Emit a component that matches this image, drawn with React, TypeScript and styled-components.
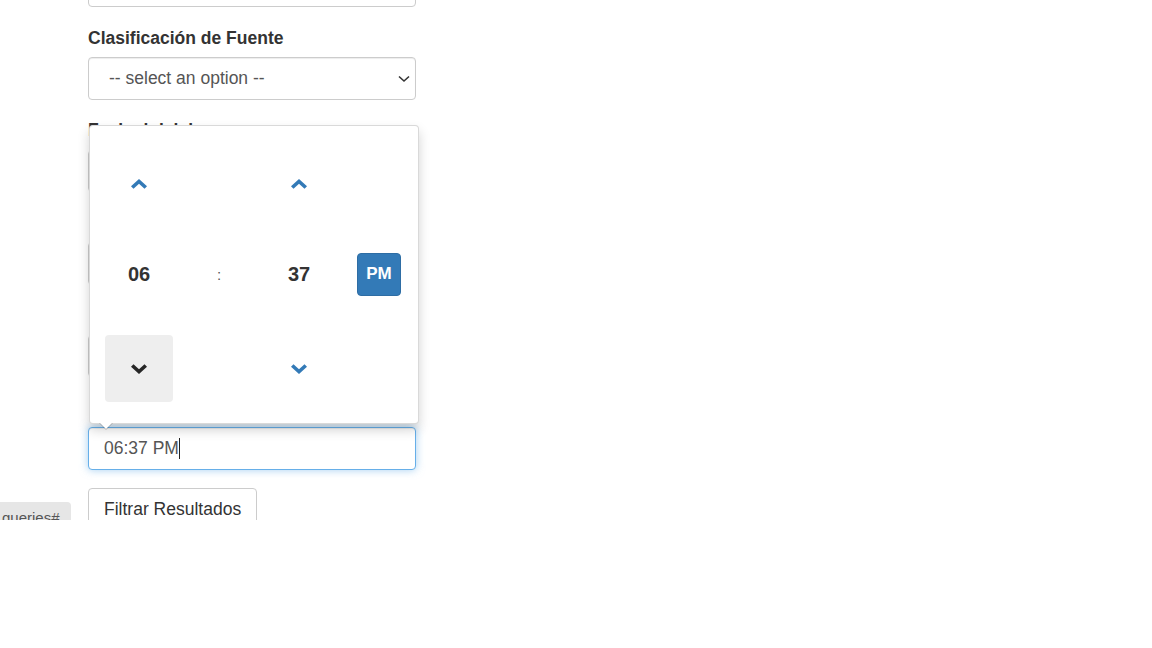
import React from "react";
import styled, { createGlobalStyle } from "styled-components";

const Global = createGlobalStyle`
  html, body { margin: 0; padding: 0; background: #fff; }
  body { font-family: "Liberation Sans", Arial, Helvetica, sans-serif; color: #333; }
  * { box-sizing: border-box; }
`;

const Viewport = styled.div`
  height: 520px;
  overflow: hidden;
`;

const Page = styled.div`
  display: grid;
  grid-template-columns: 88px 328px;
  margin-top: -35.5px;
`;

const Form = styled.div`
  grid-column: 2;
  display: flex;
  flex-direction: column;
`;

const Group = styled.div`
  margin-bottom: 18.75px;
`;

const Label = styled.label<{ $covered?: boolean }>`
  display: block;
  font-weight: 700;
  font-size: 17.5px;
  line-height: 25px;
  margin-bottom: 6.25px;
  padding-left: ${(p) => (p.$covered ? "2px" : "0")};
  color: #333;
`;

const TextInput = styled.input`
  display: block;
  width: 100%;
  height: 42.5px;
  padding: 0 15px;
  border: 1px solid #ccc;
  border-radius: 4px;
  font-family: inherit;
  font-size: 17.5px;
  color: #555;
  background: #fff;
  box-shadow: inset 0 1px 1px rgba(0, 0, 0, 0.075);
  outline: none;
`;

const SelectWrap = styled.div`
  position: relative;
`;

const Select = styled.select`
  display: block;
  width: 100%;
  height: 42.5px;
  padding: 0 30px 0 20px;
  border: 1px solid #ccc;
  border-radius: 4px;
  font-family: inherit;
  font-size: 17.5px;
  color: #555;
  background: #fff;
  box-shadow: inset 0 1px 1px rgba(0, 0, 0, 0.075);
  outline: none;
  appearance: none;
  -webkit-appearance: none;
`;

const SelectArrow = styled.svg`
  position: absolute;
  right: 6px;
  top: 17.5px;
  pointer-events: none;
`;

const FieldWrap = styled.div`
  position: relative;
`;

const FocusedField = styled.div`
  height: 42.5px;
  padding: 0 15px;
  border: 1px solid #66afe9;
  border-radius: 4px;
  font-size: 17.5px;
  color: #555;
  display: flex;
  align-items: center;
  background: #fff;
  box-shadow: inset 0 1px 1px rgba(0, 0, 0, 0.075), 0 0 8px rgba(102, 175, 233, 0.6);
`;

const Caret = styled.span`
  display: inline-block;
  width: 1px;
  height: 21px;
  background: #222;
`;

const Popup = styled.div`
  position: absolute;
  left: 1px;
  bottom: calc(100% + 3px);
  width: 330px;
  background: #fff;
  border: 1px solid rgba(0, 0, 0, 0.15);
  border-radius: 4px;
  box-shadow: 0 6px 12px rgba(0, 0, 0, 0.175);
  z-index: 10;

  &::before {
    content: "";
    position: absolute;
    left: 9px;
    bottom: -7px;
    border-left: 7px solid transparent;
    border-right: 7px solid transparent;
    border-top: 7px solid rgba(0, 0, 0, 0.2);
  }
  &::after {
    content: "";
    position: absolute;
    left: 10px;
    bottom: -6px;
    border-left: 6px solid transparent;
    border-right: 6px solid transparent;
    border-top: 6px solid #fff;
  }
`;

const Widget = styled.div`
  display: grid;
  grid-template-columns: 68px 92px 68px 1fr;
  grid-template-rows: 67px 23px 68px 27px 67px;
  padding: 24px 17px 21px 15px;
`;

const StepButton = styled.a<{ $col: number; $row: number; $active?: boolean }>`
  grid-column: ${(p) => p.$col};
  grid-row: ${(p) => p.$row};
  display: flex;
  align-items: center;
  justify-content: center;
  border-radius: 4px;
  cursor: pointer;
  color: ${(p) => (p.$active ? "#262626" : "#337ab7")};
  background: ${(p) => (p.$active ? "#eeeeee" : "transparent")};
`;

const Value = styled.div<{ $col: number }>`
  grid-column: ${(p) => p.$col};
  grid-row: 3;
  display: flex;
  align-items: center;
  justify-content: center;
  font-size: 20px;
  font-weight: 700;
  color: #333;
`;

const Separator = styled.div`
  grid-column: 2;
  grid-row: 3;
  display: flex;
  align-items: center;
  justify-content: center;
  font-size: 15px;
  color: #555;
`;

const MeridianButton = styled.button`
  grid-column: 4;
  grid-row: 3;
  justify-self: end;
  align-self: center;
  width: 44px;
  height: 43px;
  padding: 0;
  border: 1px solid #2e6da4;
  border-radius: 4px;
  background: #337ab7;
  color: #fff;
  font-family: inherit;
  font-size: 17px;
  font-weight: 700;
`;

const ActionRow = styled.div`
  display: contents;
`;

const Badge = styled.span`
  grid-column: 1;
  justify-self: start;
  align-self: start;
  margin-top: 14px;
  width: 71px;
  height: 26px;
  padding: 6px 0 0 2px;
  background: #e6e6e6;
  border-radius: 0 4px 4px 0;
  font-size: 15px;
  line-height: 20px;
  color: #555;
  white-space: nowrap;
`;

const ButtonCell = styled.div`
  grid-column: 2;
`;

const Button = styled.button`
  height: 42.5px;
  padding: 0 15px;
  border: 1px solid #ccc;
  border-radius: 4px;
  background: #fff;
  color: #333;
  font-family: inherit;
  font-size: 17.5px;
`;

const Chevron = ({ down }: { down?: boolean }) => (
  <svg width="16" height="10" viewBox="0 0 16 10" aria-hidden="true">
    <path
      d="M8 0 L16 7.2 L13.5 9.8 L8 4.8 L2.5 9.8 L0 7.2 Z"
      fill="currentColor"
      transform={down ? "rotate(180 8 5)" : undefined}
    />
  </svg>
);

export default function App() {
  return (
    <>
      <Global />
      <Viewport>
        <Page>
          <Form>
            <Group>
              <TextInput type="text" />
            </Group>
            <Group>
              <Label>Clasificación de Fuente</Label>
              <SelectWrap>
                <Select defaultValue="">
                  <option value="">-- select an option --</option>
                </Select>
                <SelectArrow width="12" height="8" viewBox="0 0 12 8" aria-hidden="true">
                  <path d="M1 1.5 L6 6 L11 1.5" fill="none" stroke="#333" strokeWidth="1.6" />
                </SelectArrow>
              </SelectWrap>
            </Group>
            <Group>
              <Label>Fecha inicial</Label>
              <TextInput type="text" />
            </Group>
            <Group>
              <Label $covered>Hora inicial</Label>
              <TextInput type="text" />
            </Group>
            <Group>
              <Label $covered>Fecha final</Label>
              <TextInput type="text" />
            </Group>
            <Group>
              <Label $covered>Hora final</Label>
              <FieldWrap>
                <Popup>
                  <Widget>
                    <StepButton $col={1} $row={1}>
                      <Chevron />
                    </StepButton>
                    <StepButton $col={3} $row={1}>
                      <Chevron />
                    </StepButton>
                    <Value $col={1}>06</Value>
                    <Separator>:</Separator>
                    <Value $col={3}>37</Value>
                    <MeridianButton>PM</MeridianButton>
                    <StepButton $col={1} $row={5} $active>
                      <Chevron down />
                    </StepButton>
                    <StepButton $col={3} $row={5}>
                      <Chevron down />
                    </StepButton>
                  </Widget>
                </Popup>
                <FocusedField role="textbox">
                  06:37 PM
                  <Caret />
                </FocusedField>
              </FieldWrap>
            </Group>
          </Form>
          <ActionRow>
            <Badge>queries#</Badge>
            <ButtonCell>
              <Button>Filtrar Resultados</Button>
            </ButtonCell>
          </ActionRow>
        </Page>
      </Viewport>
    </>
  );
}
